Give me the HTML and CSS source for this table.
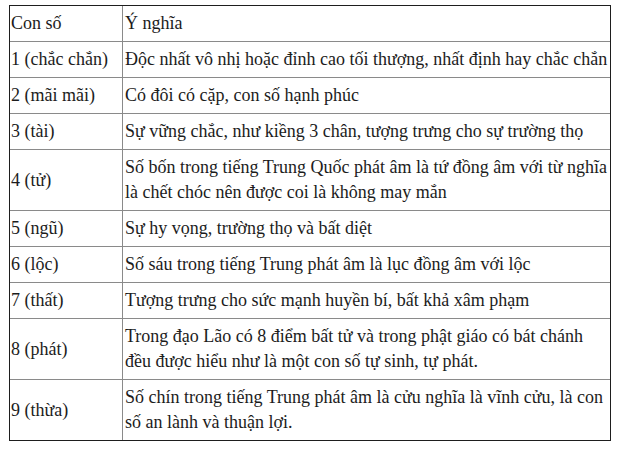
FILE: index.html
```html
<!DOCTYPE html>
<html lang="vi">
<head>
<meta charset="utf-8">
<link rel="stylesheet" href="styles.css">
</head>
<body>
<div class="page">
<table class="meaning">
<tbody>
<tr><td class="num">Con số</td><td class="text">Ý nghĩa</td></tr>
<tr><td class="num">1 (chắc chắn)</td><td class="text">Độc nhất vô nhị hoặc đỉnh cao tối thượng, nhất định hay chắc chắn</td></tr>
<tr><td class="num">2 (mãi mãi)</td><td class="text">Có đôi có cặp, con số hạnh phúc</td></tr>
<tr><td class="num">3 (tài)</td><td class="text">Sự vững chắc, như kiềng 3 chân, tượng trưng cho sự trường thọ</td></tr>
<tr><td class="num">4 (tử)</td><td class="text">Số bốn trong tiếng Trung Quốc phát âm là tứ đồng âm với từ nghĩa<br>là chết chóc nên được coi là không may mắn</td></tr>
<tr><td class="num">5 (ngũ)</td><td class="text">Sự hy vọng, trường thọ và bất diệt</td></tr>
<tr><td class="num">6 (lộc)</td><td class="text">Số sáu trong tiếng Trung phát âm là lục đồng âm với lộc</td></tr>
<tr><td class="num">7 (thất)</td><td class="text">Tượng trưng cho sức mạnh huyền bí, bất khả xâm phạm</td></tr>
<tr><td class="num">8 (phát)</td><td class="text">Trong đạo Lão có 8 điểm bất tử và trong phật giáo có bát chánh<br>đều được hiểu như là một con số tự sinh, tự phát.</td></tr>
<tr class="last"><td class="num">9 (thừa)</td><td class="text">Số chín trong tiếng Trung phát âm là cửu nghĩa là vĩnh cửu, là con<br>số an lành và thuận lợi.</td></tr>
</tbody>
</table>
</div>
</body>
</html>
```
FILE: styles.css
```css
html, body {
  margin: 0;
  padding: 0;
  background: #ffffff;
}
.page {
  padding: 5px 0 0 9px;
}
.meaning {
  border-collapse: separate;
  border-spacing: 0;
  border: 1px solid #1e1e1e;
  width: 602px;
  table-layout: fixed;
  font-family: "Liberation Serif", "Times New Roman", serif;
  font-size: 18px;
  line-height: 25px;
  color: #1c1c1c;
}
.meaning td {
  padding: 5px 0 5px 1px;
  vertical-align: middle;
  border-bottom: 1px solid #8a8a8a;
  white-space: nowrap;
  overflow: hidden;
}
.meaning tr.last td {
  border-bottom: none;
}
.meaning td.num {
  width: 111px;
  border-right: 1px solid #8a8a8a;
}
.meaning td.text {
  padding-left: 2px;
}
```
